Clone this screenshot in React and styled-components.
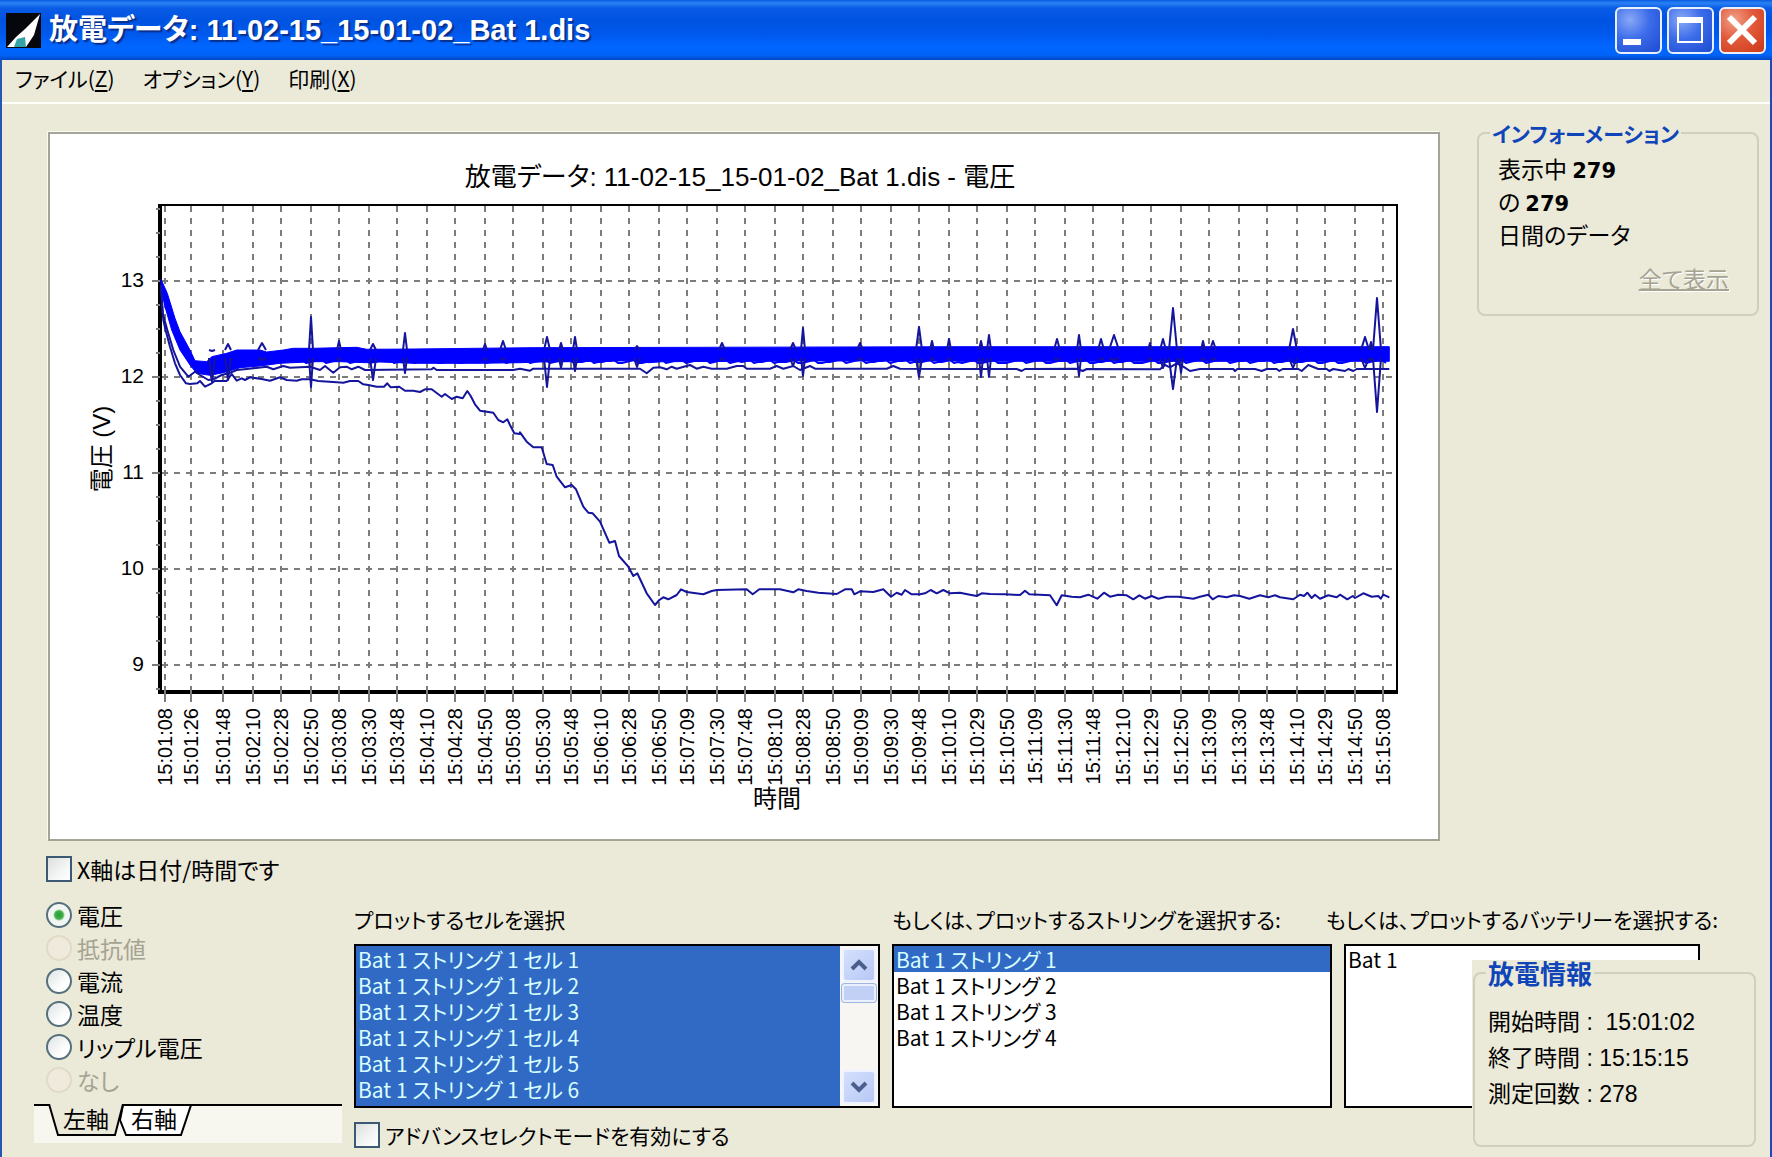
import React, { useState } from 'react';
import styled, { createGlobalStyle, css } from 'styled-components';

const COLORS = {
  FACE: '#ebe9d8',
  SHADOW: '#a6a498',
  GROUP_LINE: '#d0cfbe',
  TITLE: '#0f45b8',
  DISABLED: '#a5a392',
  SELECTION: '#316ac5',
  TRACE: '#14149c',
  BAND: '#0000ff',
  GRID: '#7c7c7c',
};

const UI_FONT = '"Noto Sans CJK JP", "Liberation Sans", sans-serif';
const CHART_FONT = '"Liberation Sans", "Noto Sans CJK JP", sans-serif';

const GlobalStyle = createGlobalStyle`
  *, *::before, *::after {
    box-sizing: border-box;
  }

  body {
    background-color: ${COLORS.FACE};
    color: #000;
    font-family: ${UI_FONT};
    font-feature-settings: 'palt';
    font-size: 21px;
    line-height: 26px;
    margin: 0;
  }

  button {
    color: inherit;
    font: inherit;
    font-feature-settings: inherit;
  }
`;

const Window = styled.div`
  border-left: 2px solid #2456b4;
  border-right: 2px solid #2446b8;
  display: flex;
  flex-direction: column;
  min-height: 100vh;
`;

const TitleBar = styled.header`
  align-items: center;
  background: linear-gradient(
    to bottom,
    #0a5be0 0,
    #2a82f4 3px,
    #0a5ce6 8px,
    #0053e1 20px,
    #0058ec 34px,
    #0066ff 46px,
    #0064fa 55px,
    #0046c4 60px
  );
  display: flex;
  gap: 8px;
  height: 60px;
  margin: 0 -2px;
  padding: 0 6px;
`;

const WindowTitle = styled.h1`
  color: #fff;
  flex: 1;
  font-family: ${CHART_FONT};
  font-size: 29px;
  font-weight: bold;
  line-height: 36px;
  margin: 0;
  text-shadow: 2px 2px 1px #0a2f8c;
  white-space: nowrap;
`;

const WindowButtons = styled.div`
  display: flex;
  gap: 5px;
`;

const WindowButton = styled.button`
  background: ${({ $close }) => ($close
    ? 'radial-gradient(circle at 30% 25%, #f0a088 0, #e2593a 45%, #c93a18 100%)'
    : 'radial-gradient(circle at 30% 25%, #89a8f6 0, #3c6cea 45%, #1c4cd0 100%)')};
  border: 2px solid #e6f0ff;
  border-radius: 6px;
  display: block;
  height: 47px;
  padding: 0;
  width: 47px;

  svg {
    display: block;
  }
`;

const MenuBar = styled.nav`
  align-items: center;
  border-bottom: 2px solid #fffffa;
  display: flex;
  gap: 28px;
  height: 44px;
  padding: 0 13px 6px;
`;

const MenuItem = styled.button`
  background: none;
  border: 0;
  padding: 0;

  u {
    text-decoration-thickness: 2px;
    text-underline-offset: 3px;
  }
`;

const Content = styled.main`
  flex: 1;
  padding: 28px 11px 9px 46px;
  position: relative;
`;

const UpperRow = styled.div`
  align-items: start;
  display: grid;
  gap: 37px;
  grid-template-columns: minmax(0, 1fr) 282px;
`;

const ChartPanel = styled.section`
  background-color: #fff;
  border: 2px solid ${COLORS.SHADOW};
  box-shadow: -1px -1px 0 #fbfaf0;

  svg {
    display: block;
    height: auto;
    width: 100%;
  }
`;

const Group = styled.fieldset`
  border: 2px solid ${COLORS.GROUP_LINE};
  border-radius: 8px;
  margin: 0;
  min-width: 0;
`;

const GroupTitle = styled.legend`
  color: ${COLORS.TITLE};
  font-size: ${({ $large }) => ($large ? '26px' : '21px')};
  font-weight: bold;
  line-height: 26px;
  padding: 0 2px;
`;

const InfoGroup = styled(Group)`
  height: 196px;
  margin-top: -12px;
  padding: 6px 28px 0 11px;
`;

const InfoLine = styled.p`
  font-size: 23px;
  line-height: 33px;
  margin: 0 0 0 8px;

  b {
    font-family: "DejaVu Sans", sans-serif;
    font-size: 21px;
    line-height: 21px;
  }
`;

const ShowAllButton = styled.button`
  background: none;
  border: 0;
  color: ${COLORS.DISABLED};
  display: block;
  font-size: 23px;
  margin: 14px 0 0 auto;
  padding: 0;
  text-decoration: underline;
  text-decoration-thickness: 2px;
  text-shadow: 1px 1px 0 #fff;
`;

const Choice = styled.label`
  align-items: center;
  color: ${({ $disabled }) => ($disabled ? COLORS.DISABLED : 'inherit')};
  display: flex;
  gap: 5px;
  white-space: nowrap;
`;

const tickBase = css`
  appearance: none;
  flex: none;
  height: 26px;
  margin: 0;
  width: 26px;
`;

const CheckBox = styled.input`
  ${tickBase}
  background: linear-gradient(135deg, #dcdfdc 0, #f4f6f6 60%, #fff 100%);
  border: 2px solid #3c5a74;

  &:checked {
    background: #21a121;
    box-shadow: inset 0 0 0 4px #f4f6f6;
  }
`;

const Radio = styled.input`
  ${tickBase}
  background: linear-gradient(135deg, #dfe4e4 0, #fff 70%);
  border: 2px solid #55707c;
  border-radius: 50%;

  &:checked {
    background: radial-gradient(circle, #2c9c34 0, #3fae46 4px, #f2f6f2 6px);
  }

  &:disabled {
    background: #efeadb;
    border-color: #e0dac6;
  }
`;

const AxisOption = styled(Choice)`
  font-size: 23px;
  margin-top: 15px;
  margin-left: -2px;
`;

const LowerRow = styled.div`
  display: grid;
  gap: 12px;
  grid-template-columns: 308px minmax(0, 1fr);
  margin: 16px 0 0 -14px;
`;

const RadioList = styled.div`
  padding-left: 12px;

  ${Choice} {
    font-size: 23px;
    height: 33px;
  }
`;

const TabStrip = styled.div`
  background-color: #f7f6ef;
  border-top: 2px solid #000;
  display: flex;
  height: 39px;
  margin-top: 8px;
  padding-left: 14px;
`;

const Tab = styled.button`
  background: none;
  border: 0;
  font-size: 23px;
  height: 32px;
  margin: -2px 0 0 ${({ $overlap }) => ($overlap ? '-8px' : '0')};
  padding: 0 0 4px;
  position: relative;
  width: 76px;
  z-index: ${({ $active }) => ($active ? 1 : 0)};

  svg {
    inset: 0;
    position: absolute;
  }

  span {
    position: relative;
  }
`;

const Selectors = styled.div`
  padding: 8px 59px 0 0;
`;

const ListGrid = styled.div`
  display: grid;
  gap: 12px;
  grid-template-columns: minmax(0, 526fr) minmax(0, 440fr) minmax(0, 356fr);
  margin-bottom: 14px;
`;

const ListColumn = styled.div`
  align-items: ${({ $centered }) => ($centered ? 'center' : 'flex-start')};
  display: flex;
  flex-direction: column;
  gap: 12px;
`;

const ListLabel = styled.div`
  white-space: nowrap;
`;

const ListFrame = styled.div`
  background-color: #fff;
  border: 2px solid #000;
  display: flex;
  height: 164px;
  width: 100%;
`;

const ListBox = styled.ul`
  flex: 1;
  list-style: none;
  margin: 0;
  overflow: hidden;
  padding: 0;
`;

const ListItem = styled.li`
  background-color: ${({ $selected }) => ($selected ? COLORS.SELECTION : 'transparent')};
  color: ${({ $selected }) => ($selected ? '#d8ffff' : '#000')};
  cursor: default;
  height: 26px;
  padding-left: 2px;
  white-space: nowrap;
`;

const ScrollBar = styled.div`
  background-color: #f7f6f2;
  display: flex;
  flex-direction: column;
  gap: 2px;
  padding: 2px;
  width: 38px;
`;

const ScrollButton = styled.button`
  background: linear-gradient(135deg, #d4e0fd, #b7c8f4);
  border: 2px solid #eef3ff;
  border-radius: 4px;
  height: 34px;
  padding: 0;

  svg {
    display: block;
    margin: auto;
  }
`;

const ScrollThumb = styled.div`
  background-color: #c2d0f6;
  border: 2px solid #eaf0ff;
  border-radius: 3px;
  box-shadow: 0 0 0 1px #9fb5e0;
  height: 18px;
  margin-bottom: auto;
`;

const SummaryPanel = styled.aside`
  background-color: ${COLORS.FACE};
  bottom: 7px;
  padding: 0 4px 3px 1px;
  position: absolute;
  right: 10px;
  width: 288px;
`;

const SummaryGroup = styled(Group)`
  height: 187px;
  padding: 18px 11px 0;
`;

const SummaryLine = styled.p`
  font-family: ${CHART_FONT};
  font-size: 23px;
  line-height: 36px;
  margin: 0 0 0 2px;
  white-space: pre;
`;

const GRID_X = [
  165, 191, 223, 253, 281, 311, 339, 369, 397, 427, 455, 485, 513, 543, 571, 601, 629, 659, 687, 717, 745, 775,
  803, 833, 861, 891, 919, 949, 977, 1007, 1035, 1065, 1093, 1123, 1151, 1181, 1209, 1239, 1267, 1297, 1325, 1355,
  1383,
];

const TIMES = [
  '15:01:08', '15:01:26', '15:01:48', '15:02:10', '15:02:28', '15:02:50', '15:03:08', '15:03:30', '15:03:48',
  '15:04:10', '15:04:28', '15:04:50', '15:05:08', '15:05:30', '15:05:48', '15:06:10', '15:06:28', '15:06:50',
  '15:07:09', '15:07:30', '15:07:48', '15:08:10', '15:08:28', '15:08:50', '15:09:09', '15:09:30', '15:09:48',
  '15:10:10', '15:10:29', '15:10:50', '15:11:09', '15:11:30', '15:11:48', '15:12:10', '15:12:29', '15:12:50',
  '15:13:09', '15:13:30', '15:13:48', '15:14:10', '15:14:29', '15:14:50', '15:15:08',
];

const VOLTS = [13, 12, 11, 10, 9];
const voltsToY = (volts) => 281 + (13 - volts) * 96;

const MINOR_TICKS = Array.from({ length: 21 }, (_, i) => 209 + i * 24);

// each run is recorded at three steps per unit, relative to its own origin
const toPoints = (runs) => runs
  .map(([originX, originY, samples]) => samples
    .split(' ')
    .map((sample) => {
      const [x, y] = sample.split(',').map(Number);
      return `${(originX + x / 3).toFixed(1)},${(originY + y / 3).toFixed(1)}`;
    })
    .join(' '))
  .join(' ');

const WEAK_CELL = toPoints([
  [80, 190, '243,290 247,350 250,390 258,425 270,470 285,520 300,555 318,580 330,582 352,580 360,573 375,590 395,580 405,572 415,573 440,573 455,552 470,572 485,565 495,570 510,562 545,567 570,572 600,562 620,570 650,572 665,568 690,568 715,573 770,577 790,578 810,573 835,573 850,583 865,585 890,590 912,590 922,580 932,592 958,590 975,602 1000,602 1020,606 1035,598 1055,598 1085,620 1095,612 1115,627 1130,620 1148,625 1162,603 1172,618 1185,643 1200,662 1240,668 1255,690 1270,697 1282,688 1290,705 1303,730 1320,732'],
  [520, 260, '0,517 20,545 40,562 65,562 80,612 98,615 110,650 135,682 155,675 168,688 190,740 205,758 218,760 240,785 268,848 285,843 297,888 325,920 340,948 352,940 380,1000 405,1035 418,1020 430,1012 445,1018 470,1005 483,988 500,996 550,1003 575,993 590,990 680,988 698,1003 718,988 780,988 820,997 835,988 860,993 895,998 950,1002 975,988 995,988 1003,1003 1020,994 1060,996 1090,988 1113,1010 1130,998 1145,1004 1155,990 1175,1003 1200,1003 1215,1000 1232,990 1250,1000 1270,990 1290,1000'],
  [960, 260, '0,998 30,1004 50,1008 65,1000 90,1002 135,1003 180,1005 195,992 208,1003 270,1006 290,1036 305,1006 335,1010 360,1012 385,1004 412,1016 432,998 450,1010 475,1004 500,1006 520,1018 538,1006 555,1016 575,1008 595,1016 620,1010 655,1010 700,1016 720,1010 745,1004 758,1018 775,1008 800,1012 822,1006 840,1008 868,1016 900,1006 925,1012 945,1006 960,1012 1000,1018 1020,1004 1032,1008 1042,998 1055,1014 1065,1004 1080,1016 1105,1006 1130,1012 1140,1004 1162,1018 1178,1008 1185,1014 1210,1000 1235,1010 1255,1008 1262,1016 1270,1004 1288,1012'],
]);

const LOW_CELL = toPoints([
  [80, 190, '243,285 248,370 262,420 280,480 300,530 325,560 345,545 360,555 385,570 400,568 425,555 450,548 470,540 500,537 560,530 580,538 610,528 630,533 690,530 720,540 735,528 760,548 780,532 800,530 815,538 835,530 855,540 1055,538 1060,533 1070,540 1300,540'],
  [520, 260, '0,326 30,332 40,326 360,326 380,340 400,323 420,322 440,328 455,320 470,326 510,315 530,326 550,320 575,326 620,326 650,318 670,318 680,326 750,326 770,318 790,326 820,318 840,330 870,318 885,326 1100,326 1120,318 1140,326 1310,327'],
  [960, 260, '0,327 170,327 185,333 195,327 350,326 368,333 380,327 600,328 615,315 630,322 650,310 670,320 690,333 720,327 820,327 825,333 832,327 885,327 905,333 920,327 950,327 958,333 968,327 1015,327 1025,333 1045,315 1075,327 1100,327 1108,333 1120,327 1155,333 1165,327 1180,333 1190,327 1288,327'],
]);

const BAND = toPoints([
  [80, 190, '243,268 262,310 285,385 300,425 330,480 345,512 380,515 395,500 440,490 470,480 540,480 560,486 610,480 640,475 700,475 830,472 860,478 1000,477 1350,473'],
  [960, 260, '0,260 1288,260 1288,304 0,304'],
  [520, 260, '1310,303 850,303 430,305 385,308 340,302 250,304 60,306 0,308'],
  [80, 190, '1200,520 1000,520 900,516 860,518 780,515 700,515 600,520 540,528 480,533 430,548 390,556 350,550 330,525 300,480 275,420 255,350 243,300'],
]);

const LOWER_RIPPLE = Array.from({ length: 272 }, (_, i) => {
  const x = 302 + i * 4;
  const drop = (i * 7 + (i % 5) * 3 + (i % 11)) % 4;
  return `${x},${360 + drop}`;
}).join(' ');

// x, peak above the band, dip below it, half width
const SPIKES = [
  [212, 351, 382, 3], [228, 344, 380, 3], [262, 343, 360, 4], [311, 317, 387, 2], [339, 341, 360, 2],
  [373, 344, 380, 3], [405, 333, 373, 2], [485, 344, 360, 2], [503, 341, 360, 3], [547, 337, 387, 3],
  [561, 343, 368, 2], [575, 337, 371, 2], [637, 346, 367, 3], [722, 343, 360, 3], [793, 343, 366, 3],
  [803, 328, 376, 2], [860, 343, 360, 3], [919, 327, 377, 3], [932, 341, 360, 2], [949, 339, 360, 2],
  [981, 341, 377, 2], [989, 335, 377, 2], [1057, 339, 360, 3], [1079, 335, 376, 2], [1101, 339, 360, 3],
  [1114, 335, 360, 5], [1150, 343, 360, 2], [1163, 339, 368, 3], [1173, 308, 389, 4], [1181, 347, 373, 2],
  [1203, 341, 360, 2], [1213, 341, 360, 3], [1293, 329, 368, 4], [1365, 337, 368, 4], [1371, 342, 360, 2],
  [1377, 298, 412, 4],
];

const VoltageChart = () => (
  <svg viewBox="50 134 1388 705" role="img" aria-label="放電データ 電圧" fontFamily={CHART_FONT}>
    <text x="740" y="186" textAnchor="middle" fontSize="26">放電データ: 11-02-15_15-01-02_Bat 1.dis - 電圧</text>
    <g stroke={COLORS.GRID} strokeWidth="2" strokeDasharray="6 6" shapeRendering="crispEdges">
      {GRID_X.map((x) => <line key={x} x1={x} x2={x} y1="206" y2="690" />)}
      {VOLTS.map((volts) => <line key={volts} x1="162" x2="1393" y1={voltsToY(volts)} y2={voltsToY(volts)} />)}
    </g>
    <g fill="none" stroke="#000" shapeRendering="crispEdges">
      <path d="M158 205H1397V692" strokeWidth="2" />
      <path d="M160 204V692H1398" strokeWidth="4" />
    </g>
    <g stroke={COLORS.GRID} strokeWidth="2" shapeRendering="crispEdges">
      {MINOR_TICKS.map((y) => <line key={y} x1="156" x2="160" y1={y} y2={y} />)}
      {VOLTS.map((volts) => <line key={volts} x1="152" x2="160" y1={voltsToY(volts)} y2={voltsToY(volts)} />)}
      {GRID_X.map((x) => <line key={x} x1={x} x2={x} y1="688" y2="702" />)}
    </g>
    <polygon points={BAND} fill={COLORS.BAND} stroke={COLORS.BAND} strokeWidth="1" />
    <g fill="none" stroke={COLORS.TRACE} strokeWidth="2" strokeLinejoin="round">
      <polyline points={WEAK_CELL} />
      <polyline points={LOW_CELL} />
      <polyline points={LOWER_RIPPLE} stroke={COLORS.BAND} />
      {SPIKES.map(([x, peak, dip, half]) => (
        <path key={x} d={`M${x - half} 350L${x} ${peak}L${x + half} 350M${x - half} 358L${x} ${dip}L${x + half} 358`} />
      ))}
    </g>
    <g fontSize="21" textAnchor="end">
      {VOLTS.map((volts) => <text key={volts} x="144" y={voltsToY(volts) + 6}>{volts}</text>)}
    </g>
    <g fontSize="20" textAnchor="end">
      {TIMES.map((time, i) => (
        <text key={time} transform={`translate(${GRID_X[i] + 7} 708) rotate(-90)`}>{time}</text>
      ))}
    </g>
    <text transform="translate(110 449) rotate(-90)" textAnchor="middle" fontSize="24">電圧 (V)</text>
    <text x="777" y="807" textAnchor="middle" fontSize="24">時間</text>
  </svg>
);

const AppIcon = () => (
  <svg width="35" height="35" viewBox="0 0 35 35" aria-hidden="true">
    <rect width="35" height="35" fill="#05070c" />
    <path d="M34 1L28 22L20 34H1L10 24L19 16Z" fill="#fff" />
    <path d="M11 26L19 24L20 34H8Z" fill="#35a3a8" />
  </svg>
);

const Arrow = ({ down }) => (
  <svg width="18" height="12" viewBox="0 0 18 12" aria-hidden="true">
    <path d={down ? 'M2 2L9 9L16 2' : 'M2 10L9 3L16 10'} fill="none" stroke="#4a5f8c" strokeWidth="4" />
  </svg>
);

const SelectList = ({
  centered,
  items,
  label,
  name,
  scroll,
  selected,
}) => {
  const [picked, setPicked] = useState(selected);
  return (
    <ListColumn $centered={centered}>
      <ListLabel id={`${name}-label`}>{label}</ListLabel>
      <ListFrame>
        <ListBox role="listbox" aria-labelledby={`${name}-label`} aria-multiselectable={scroll} tabIndex={0}>
          {items.map((item) => (
            <ListItem
                key={item}
                role="option"
                aria-selected={picked.includes(item)}
                $selected={picked.includes(item)}
                onClick={() => setPicked([item])}>
              {item}
            </ListItem>
          ))}
        </ListBox>
        {scroll && (
          <ScrollBar>
            <ScrollButton type="button" aria-label="上へ"><Arrow /></ScrollButton>
            <ScrollThumb />
            <ScrollButton type="button" aria-label="下へ"><Arrow down /></ScrollButton>
          </ScrollBar>
        )}
      </ListFrame>
    </ListColumn>
  );
};

const MENUS = [['ファイル', 'Z'], ['オプション', 'Y'], ['印刷', 'X']];

const PARAMETERS = [
  { label: '電圧' },
  { label: '抵抗値', disabled: true },
  { label: '電流' },
  { label: '温度' },
  { label: 'リップル電圧' },
  { label: 'なし', disabled: true },
];

const CELLS = [1, 2, 3, 4, 5, 6, 7].map((n) => `Bat 1 ストリング 1 セル ${n}`);
const STRINGS = [1, 2, 3, 4].map((n) => `Bat 1 ストリング ${n}`);
const BATTERIES = ['Bat 1'];

const App = () => {
  const [parameter, setParameter] = useState('電圧');

  return (
    <>
      <GlobalStyle />
      <Window>
        <TitleBar>
          <AppIcon />
          <WindowTitle>放電データ: 11-02-15_15-01-02_Bat 1.dis</WindowTitle>
          <WindowButtons>
            <WindowButton type="button" aria-label="最小化">
              <svg width="43" height="43" viewBox="0 0 43 43"><rect x="6" y="30" width="18" height="6" fill="#fff" /></svg>
            </WindowButton>
            <WindowButton type="button" aria-label="最大化">
              <svg width="43" height="43" viewBox="0 0 43 43">
                <rect x="9" y="9" width="24" height="24" fill="none" stroke="#fff" strokeWidth="2" />
                <rect x="8" y="8" width="26" height="6" fill="#fff" />
              </svg>
            </WindowButton>
            <WindowButton type="button" aria-label="閉じる" $close>
              <svg width="43" height="43" viewBox="0 0 43 43">
                <path d="M8 8L34 34M34 8L8 34" stroke="#fff" strokeWidth="6" />
              </svg>
            </WindowButton>
          </WindowButtons>
        </TitleBar>
        <MenuBar>
          {MENUS.map(([label, key]) => (
            <MenuItem key={key} type="button">
              {label}
              (
              <u>{key}</u>
              )
            </MenuItem>
          ))}
        </MenuBar>
        <Content>
          <UpperRow>
            <ChartPanel>
              <VoltageChart />
            </ChartPanel>
            <InfoGroup>
              <GroupTitle>インフォーメーション</GroupTitle>
              <InfoLine>表示中 <b>279</b></InfoLine>
              <InfoLine>の <b>279</b></InfoLine>
              <InfoLine>日間のデータ</InfoLine>
              <ShowAllButton type="button" disabled>全て表示</ShowAllButton>
            </InfoGroup>
          </UpperRow>
          <AxisOption>
            <CheckBox type="checkbox" />
            X軸は日付/時間です
          </AxisOption>
          <LowerRow>
            <div>
              <RadioList role="radiogroup">
                {PARAMETERS.map(({ label, disabled }) => (
                  <Choice key={label} $disabled={disabled}>
                    <Radio
                        type="radio"
                        name="parameter"
                        checked={parameter === label}
                        disabled={disabled}
                        onChange={() => setParameter(label)} />
                    {label}
                  </Choice>
                ))}
              </RadioList>
              <TabStrip role="tablist">
                <Tab type="button" role="tab" aria-selected="true" $active>
                  <svg width="76" height="32" viewBox="0 0 76 32" aria-hidden="true">
                    <path d="M1 0L10 31H67L75 0" fill={COLORS.FACE} stroke="#000" strokeWidth="2" />
                  </svg>
                  <span>左軸</span>
                </Tab>
                <Tab type="button" role="tab" aria-selected="false" $overlap>
                  <svg width="76" height="32" viewBox="0 0 76 32" aria-hidden="true">
                    <path d="M7 1L4 16L10 31H65L75 1Z" fill="#fff" stroke="#000" strokeWidth="2" />
                  </svg>
                  <span>右軸</span>
                </Tab>
              </TabStrip>
            </div>
            <Selectors>
              <ListGrid>
                <SelectList name="cells" label="プロットするセルを選択" items={CELLS} selected={CELLS} scroll />
                <SelectList
                    name="strings"
                    label="もしくは、プロットするストリングを選択する:"
                    items={STRINGS}
                    selected={STRINGS.slice(0, 1)} />
                <SelectList
                    name="batteries"
                    label="もしくは、プロットするバッテリーを選択する:"
                    items={BATTERIES}
                    selected={[]}
                    centered />
              </ListGrid>
              <Choice>
                <CheckBox type="checkbox" />
                アドバンスセレクトモードを有効にする
              </Choice>
            </Selectors>
          </LowerRow>
          <SummaryPanel>
            <SummaryGroup>
              <GroupTitle $large>放電情報</GroupTitle>
              <SummaryLine>開始時間 :  15:01:02</SummaryLine>
              <SummaryLine>終了時間 : 15:15:15</SummaryLine>
              <SummaryLine>測定回数 : 278</SummaryLine>
            </SummaryGroup>
          </SummaryPanel>
        </Content>
      </Window>
    </>
  );
};

export default App;
